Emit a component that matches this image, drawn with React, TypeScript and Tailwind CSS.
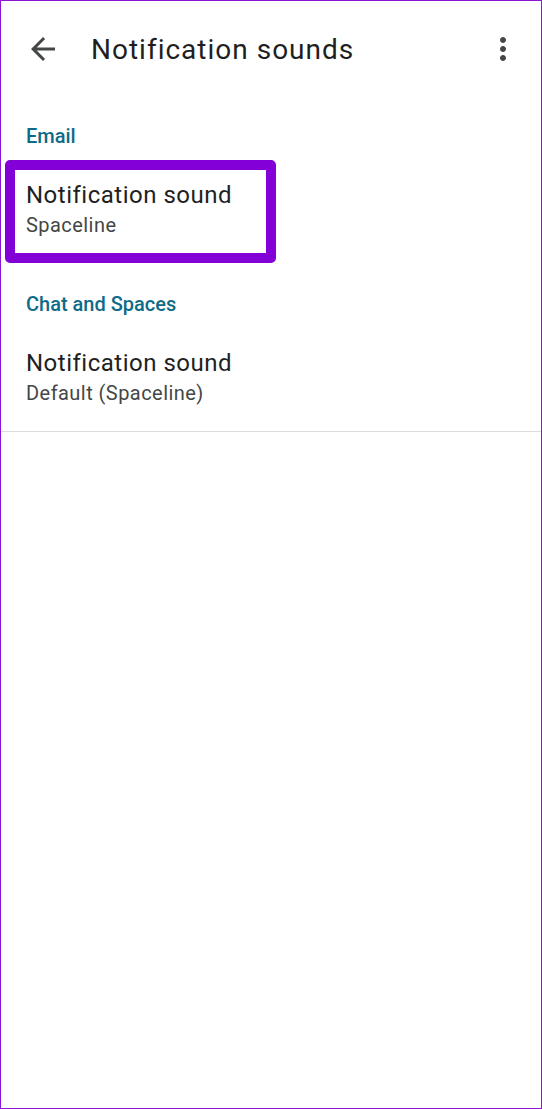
import React from "react";

const font = { fontFamily: "Roboto, 'Noto Sans', Arial, sans-serif" };

function Row({ title, subtitle }: { title: string; subtitle: string }) {
  return (
    <div className="pl-[25px]">
      <div className="text-[24px] leading-[30px] tracking-[0.5px] text-[#1f1f1f]">{title}</div>
      <div className="mt-[2px] text-[20px] leading-[26px] tracking-[0.45px] text-[#444746]">{subtitle}</div>
    </div>
  );
}

export default function App() {
  return (
    <div
      className="relative w-[542px] h-[1109px] border border-[#8a16d6] bg-white overflow-hidden"
      style={font}
    >
      {/* Header */}
      <div className="h-[95px] flex items-center pl-[24px] pr-[20px]">
        <svg width="36" height="36" viewBox="0 0 24 24" className="shrink-0">
          <path
            fill="#444746"
            d="M20 11H7.83l5.59-5.59L12 4l-8 8 8 8 1.41-1.41L7.83 13H20v-2z"
          />
        </svg>
        <div className="ml-[30px] text-[28px] leading-[36px] tracking-[1px] text-[#1f1f1f] flex-1 pt-[2px]">
          Notification sounds
        </div>
        <svg width="36" height="36" viewBox="0 0 24 24" className="shrink-0">
          <path
            fill="#444746"
            d="M12 8c1.1 0 2-.9 2-2s-.9-2-2-2-2 .9-2 2 .9 2 2 2zm0 2c-1.1 0-2 .9-2 2s.9 2 2 2 2-.9 2-2-.9-2-2-2zm0 6c-1.1 0-2 .9-2 2s.9 2 2 2 2-.9 2-2-.9-2-2-2z"
          />
        </svg>
      </div>

      {/* Email section */}
      <div className="pt-[26px] pl-[25px] text-[20px] leading-[28px] font-medium text-[#0e6b87]">
        Email
      </div>
      <div className="relative pt-[30px]">
        <Row title="Notification sound" subtitle="Spaceline" />
      </div>

      {/* Chat and Spaces section */}
      <div className="pt-[52px] pl-[25px] text-[20px] leading-[28px] font-medium text-[#0e6b87]">
        Chat and Spaces
      </div>
      <div className="pt-[30px]">
        <Row title="Notification sound" subtitle="Default (Spaceline)" />
      </div>

      <div className="mt-[25px] h-px bg-[#dadce0]" />

      {/* Highlight annotation */}
      <div className="absolute left-[4px] top-[159px] w-[271px] h-[103px] border-[10px] border-[#8300d6] rounded-[5px] pointer-events-none" />
    </div>
  );
}
